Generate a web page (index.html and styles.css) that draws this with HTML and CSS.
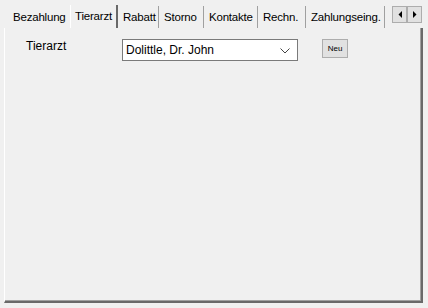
FILE: index.html
```html
<!DOCTYPE html>
<html lang="de">
<head>
<meta charset="UTF-8">
<title>Tierarzt</title>
<link rel="stylesheet" href="styles.css">
</head>
<body>
<div class="window">
  <div class="tabstrip">
    <div class="tabs">
      <div class="tab tab-bezahlung">Bezahlung</div>
      <div class="tab tab-tierarzt active">Tierarzt</div>
      <div class="tab tab-rabatt">Rabatt</div>
      <div class="tab tab-storno">Storno</div>
      <div class="tab tab-kontakte">Kontakte</div>
      <div class="tab tab-rechn">Rechn.</div>
      <div class="tab tab-zahlung">Zahlungseing.</div>
    </div>
    <div class="scroller">
      <button class="arrow">
        <svg width="4" height="7" viewBox="0 0 4 7"><path d="M4 0v7L0.5 3.5z" fill="#000"/></svg>
      </button>
      <button class="arrow">
        <svg width="4" height="7" viewBox="0 0 4 7"><path d="M0 0v7l3.5-3.5z" fill="#000"/></svg>
      </button>
    </div>
  </div>
  <div class="page">
    <div class="row">
      <label class="label">Tierarzt</label>
      <div class="combo">
        <span class="combo-text">Dolittle, Dr. John</span>
        <svg class="chevron" width="10" height="6" viewBox="0 0 10 6"><path d="M0.5 0.5l4.5 4.5 4.5-4.5" fill="none" stroke="#444" stroke-width="1"/></svg>
      </div>
      <button class="btn">Neu</button>
    </div>
  </div>
</div>
</body>
</html>
```
FILE: styles.css
```css
body {
  margin: 0;
  background: #f0f0f0;
  font-family: Tahoma, "Liberation Sans", Arial, sans-serif;
  font-size: 12px;
  color: #000;
}
.window {
  width: 428px;
  height: 308px;
  box-sizing: border-box;
  padding: 5px 5px 0 4px;
}
.tabstrip {
  display: flex;
  height: 23px;
  padding-left: 4px;
}
.tabs {
  display: flex;
  align-items: flex-end;
  flex: 1;
}
.tab {
  flex: none;
  height: 22px;
  line-height: 22px;
  padding-left: 5px;
  font-size: 11.5px;
  letter-spacing: -0.2px;
  border-right: 1px solid #a0a0a0;
  white-space: nowrap;
  overflow: hidden;
  box-sizing: border-box;
}
.tab-bezahlung { width: 62px; border-right: none; }
.tab-tierarzt { width: 48px; }
.tab-rabatt { width: 41px; }
.tab-storno { width: 45px; }
.tab-kontakte { width: 54px; }
.tab-rechn { width: 48px; }
.tab-zahlung { width: 79px; }
.tab.active {
  height: 23px;
  padding-left: 4px;
  border-left: 1px solid #fff;
  border-right: 2px solid #696969;
}
.scroller {
  display: flex;
  margin-top: 1px;
  margin-right: 1px;
}
.arrow {
  width: 15px;
  height: 17px;
  margin: 0;
  padding: 0;
  border: 1px solid #adadad;
  background: #e1e1e1;
  display: flex;
  align-items: center;
  justify-content: center;
}
.page {
  height: 275px;
  box-sizing: border-box;
  border-left: 1px solid #fff;
  border-right: 2px solid #696969;
  border-bottom: 2px solid #696969;
  box-shadow: inset -1px -1px 0 #a0a0a0;
  padding: 10px 0 0 21px;
}
.row {
  display: flex;
  align-items: flex-start;
}
.label {
  width: 96px;
  padding-top: 1px;
}
.combo {
  width: 176px;
  height: 22px;
  box-sizing: border-box;
  border: 1px solid #7a7a7a;
  background: #fff;
  display: flex;
  align-items: center;
  justify-content: space-between;
  padding: 0 7px 0 3px;
  margin-top: 1px;
}
.chevron {
  margin-top: 1px;
}
.btn {
  margin-left: 24px;
  margin-top: 1px;
  width: 26px;
  height: 19px;
  padding: 0;
  border: 1px solid #adadad;
  background: #e1e1e1;
  font-family: Tahoma, "Liberation Sans", Arial, sans-serif;
  font-size: 8px;
  color: #000;
}
```
